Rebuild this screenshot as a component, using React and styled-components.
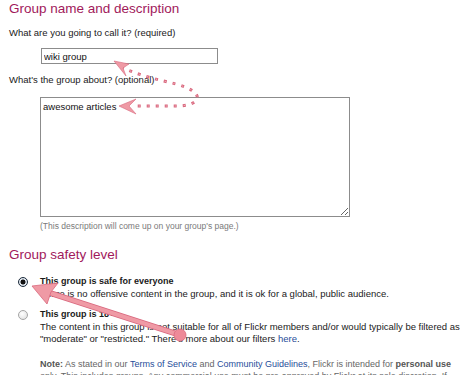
import React from 'react'
import styled, { createGlobalStyle } from "styled-components";

const GlobalStyle = createGlobalStyle`
  body {
    margin: 0;
    background: #fff;
    font-family: "Liberation Sans", Arial, sans-serif;
    color: #1a1a1a;
  }
`;

const magenta = "#a1195b";
const linkBlue = "#1f4d9a";
const arrowPink = "#ef9aa5";
const arrowEdge = "#d9687e";

export default function App() {
  return (
    <>
      <GlobalStyle />
      <Page>
        <SectionTitle>Group name and description</SectionTitle>
        <Label>What are you going to call it? (required)</Label>
        <NameInput readOnly value="wiki group" />
        <Label>What's the group about? (optional)</Label>
        <AboutArea readOnly value="awesome articles" />
        <Hint>(This description will come up on your group's page.)</Hint>

        <SectionTitle $gap>Group safety level</SectionTitle>
        <Option>
          <Radio $checked />
          <OptionText>
            <OptionHead>This group is safe for everyone</OptionHead>
            There is no offensive content in the group, and it is ok for a global, public audience.
          </OptionText>
        </Option>
        <Option>
          <Radio />
          <OptionText>
            <OptionHead>This group is 18+</OptionHead>
            The content in this group is not suitable for all of Flickr members and/or would typically be filtered as
            "moderate" or "restricted." There's more about our filters <Link>here</Link>.
          </OptionText>
        </Option>
        <Note>
          <b>Note:</b> As stated in our <Link>Terms of Service</Link> and <Link>Community Guidelines</Link>, Flickr is intended for <b>personal use</b> only. This includes groups. Any commercial use must be pre-approved by Flickr at its sole discretion. If
        </Note>

        <Overlay width="460" height="375" viewBox="0 0 460 375">
          <path
            d="M121 67 C 140 76, 160 80, 176 84 C 190 88, 199 93, 197 99 C 194 105, 184 106, 175 106 L 132 106"
            fill="none"
            stroke={arrowEdge}
            strokeWidth="3"
            strokeDasharray="3 6"
          />
          <path
            d="M121 67 C 140 76, 160 80, 176 84 C 190 88, 199 93, 197 99 C 194 105, 184 106, 175 106 L 132 106"
            fill="none"
            stroke="#f6c3cb"
            strokeWidth="1"
            strokeDasharray="1 8"
            strokeDashoffset="-1"
          />
          <polygon points="114,61 129,64 123,68 126,76" fill={arrowPink} stroke={arrowEdge} strokeWidth="0.6" />
          <polygon points="119,106 136,99 129,106 136,114" fill={arrowPink} stroke={arrowEdge} strokeWidth="0.6" />

          <line x1="180" y1="335" x2="44" y2="291" stroke={arrowEdge} strokeWidth="6" strokeLinecap="round" />
          <line x1="180" y1="335" x2="44" y2="291" stroke={arrowPink} strokeWidth="4" strokeLinecap="round" />
          <polygon points="32,286 58,283 51,292 47,304" fill={arrowPink} stroke={arrowEdge} strokeWidth="0.8" />
          <circle cx="180" cy="335" r="6" fill="#ee8a99" stroke={arrowEdge} strokeWidth="0.8" />
        </Overlay>
      </Page>
    </>
  );
}

const Page = styled.div`
  position: relative;
  width: 460px;
  height: 375px;
  overflow: hidden;
  padding: 1px 0 0 9px;
  box-sizing: border-box;
`;

const SectionTitle = styled.h2`
  margin: ${({ $gap }) => ($gap ? "15px 0 0" : "0")};
  font-size: 13.5px;
  line-height: 16px;
  font-weight: normal;
  color: ${magenta};
`;

const Label = styled.div`
  margin-top: 10px;
  font-size: 9.5px;
  line-height: 12px;
`;

const NameInput = styled.input`
  display: block;
  margin: 9px 0 0 32px;
  width: 177px;
  height: 16px;
  box-sizing: border-box;
  border: 1px solid #8c8c8c;
  padding: 0 2px;
  font-family: inherit;
  font-size: 9.5px;
  color: #111;
  outline: none;
`;

const AboutArea = styled.textarea`
  display: block;
  margin: 11px 0 0 31px;
  width: 310px;
  height: 120px;
  box-sizing: border-box;
  border: 1px solid #8c8c8c;
  padding: 3px 2px;
  font-family: inherit;
  font-size: 9.5px;
  color: #111;
  resize: both;
  outline: none;
`;

const Hint = styled.div`
  margin: 4px 0 0 31px;
  font-size: 8.5px;
  line-height: 11px;
  color: #7a7a7a;
`;

const Option = styled.div`
  display: grid;
  grid-template-columns: 31px 1fr;
  margin-top: 12px;
  & + & {
    margin-top: 8px;
  }
`;

const Radio = styled.span`
  margin: 2px 0 0 9px;
  width: 10px;
  height: 10px;
  box-sizing: border-box;
  border-radius: 50%;
  border: 1px solid ${({ $checked }) => ($checked ? "#1b2a3a" : "#a5a5a5")};
  background: ${({ $checked }) =>
    $checked
      ? "radial-gradient(circle, #111 0 2.2px, #dfe6ee 2.8px)"
      : "radial-gradient(circle at 40% 35%, #fff, #dcdcdc)"};
`;

const OptionText = styled.div`
  font-size: 9.5px;
  line-height: 12.5px;
  color: #1a1a1a;
`;

const OptionHead = styled.div`
  font-size: 9px;
  font-weight: bold;
`;

const Link = styled.span`
  color: ${linkBlue};
`;

const Note = styled.div`
  margin: 12px 0 0 31px;
  font-size: 9px;
  line-height: 12px;
  color: #666;
  b {
    color: #555;
  }
`;

const Overlay = styled.svg`
  position: absolute;
  left: 0;
  top: 0;
  pointer-events: none;
`;
